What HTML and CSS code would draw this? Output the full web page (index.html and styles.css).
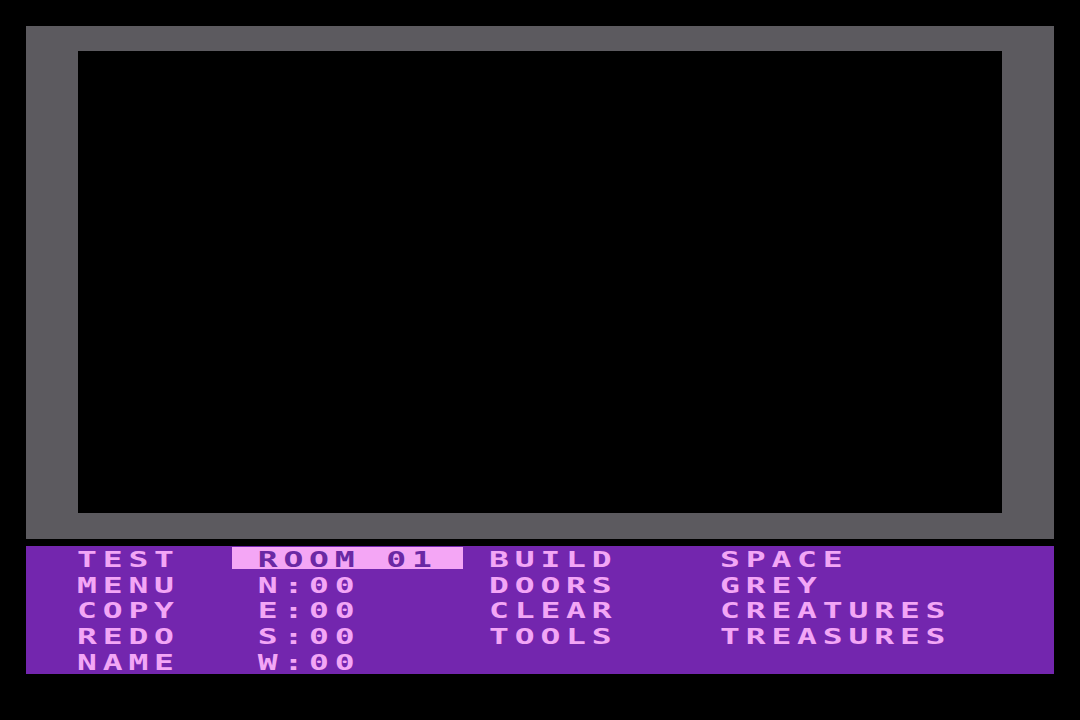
FILE: index.html
```html
<!DOCTYPE html>
<html>
<head>
<meta charset="utf-8">
<link rel="stylesheet" href="styles.css">
</head>
<body>
<div class="screen">
  <div class="frame"><div class="view"></div></div>
  <div class="panel">
    <div class="col col-cmd">
      <div class="cell"><span class="txt">TEST</span></div>
      <div class="cell"><span class="txt">MENU</span></div>
      <div class="cell"><span class="txt">COPY</span></div>
      <div class="cell"><span class="txt">REDO</span></div>
      <div class="cell"><span class="txt">NAME</span></div>
    </div>
    <div class="col col-room">
      <div class="cell hl"><span class="txt"> ROOM 01</span></div>
      <div class="cell"><span class="txt"> N:00</span></div>
      <div class="cell"><span class="txt"> E:00</span></div>
      <div class="cell"><span class="txt"> S:00</span></div>
      <div class="cell"><span class="txt"> W:00</span></div>
    </div>
    <div class="col col-act">
      <div class="cell"><span class="txt">BUILD</span></div>
      <div class="cell"><span class="txt">DOORS</span></div>
      <div class="cell"><span class="txt">CLEAR</span></div>
      <div class="cell"><span class="txt">TOOLS</span></div>
    </div>
    <div class="col col-obj">
      <div class="cell"><span class="txt">SPACE</span></div>
      <div class="cell"><span class="txt">GREY</span></div>
      <div class="cell"><span class="txt">CREATURES</span></div>
      <div class="cell"><span class="txt">TREASURES</span></div>
    </div>
  </div>
</div>
</body>
</html>
```

FILE: styles.css
```css
html, body {
  margin: 0;
  padding: 0;
  background: #000;
}
body {
  width: 1080px;
  height: 720px;
  overflow: hidden;
}
.screen {
  padding: 26px 0 0 26px;
  width: 1028px;
}
.frame {
  width: 1028px;
  height: 513px;
  box-sizing: border-box;
  border-style: solid;
  border-color: #5c5a5f;
  border-width: 25px 52px 26px 52px;
  background: #000;
}
.view {
  width: 100%;
  height: 100%;
  background: #000;
}
.panel {
  margin-top: 7px;
  height: 128px;
  background: #7326ae;
  display: flex;
  padding: 1.2px 0 0 51.4px;
  box-sizing: border-box;
}
.col {
  display: flex;
  flex-direction: column;
}
.col-cmd { width: 154.2px; }
.col-room { width: 257px; }
.col-act { width: 231.3px; }
.col-obj { flex: 1; }
.cell {
  height: 25.6px;
  line-height: 25.6px;
  white-space: pre;
  color: #f3a6f6;
}
.cell.hl {
  background: linear-gradient(#f4a6f5, #f4a6f5) 0 0 / 231.3px 22px no-repeat;
  color: #6a28a4;
}
.txt {
  display: inline-block;
  vertical-align: top;
  font-family: "DejaVu Sans Mono", monospace;
  font-weight: bold;
  font-size: 22px;
  line-height: 25.6px;
  letter-spacing: 3.89px;
  transform-origin: 0 0;
  transform: scaleX(1.5);
}
```
